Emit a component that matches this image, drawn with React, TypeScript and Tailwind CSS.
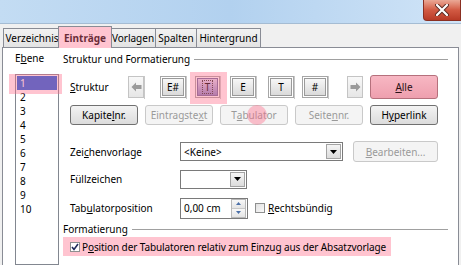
import React from "react";

const U = ({ children }: { children: React.ReactNode }) => (
  <span className="underline underline-offset-[1px] decoration-[1px]">{children}</span>
);

const tabs = [
  { label: "Verzeichnis", w: "w-[57px]" },
  { label: "Einträge", w: "w-[50px]", active: true },
  { label: "Vorlagen", w: "w-[45px]" },
  { label: "Spalten", w: "w-[41px]" },
  { label: "Hintergrund", w: "w-[65px]" },
];

function Btn({
  children,
  w = "w-[68px]",
  h = "h-[20px]",
  disabled,
}: {
  children: React.ReactNode;
  w?: string;
  h?: string;
  disabled?: boolean;
}) {
  return (
    <div
      className={
        "relative flex items-center justify-center rounded-[3px] border whitespace-nowrap " +
        w +
        " " +
        h +
        (disabled
          ? " border-[#c9c9c9] bg-[#f4f4f4] text-[#9a9a9a]"
          : " border-[#707070] bg-gradient-to-b from-[#f3f3f3] to-[#dcdcdc] text-black")
      }
    >
      {children}
    </div>
  );
}

function Token({ label, active }: { label: string; active?: boolean }) {
  return (
    <div className="relative border border-[#a6a6a6] p-[1px] bg-white">
      <div
        className={
          "flex items-center justify-center h-[18px] border " +
          (active
            ? "w-[21px] border-[#6b6b9e] bg-gradient-to-b from-[#dcdcf0] to-[#8587c4]"
            : "w-[22px] border-[#9a9a9a] bg-gradient-to-b from-[#f7f7f7] to-[#dadada]")
        }
      >
        <span className={active ? "border border-dotted border-[#333] px-[2px] leading-[12px]" : ""}>
          {label}
        </span>
      </div>
      {active && (
        <div className="absolute -left-[6px] -top-[5px] w-[37px] h-[32px] bg-[#ff6b8a]/40" />
      )}
    </div>
  );
}

function Gap({ w }: { w: string }) {
  return <div className={"h-[23px] bg-white border-l border-[#c8c8c8] " + w} />;
}

function Arrow({ dir }: { dir: "l" | "r" }) {
  return (
    <div className="w-[16px] h-[22px] border border-[#c4c4c4] bg-gradient-to-b from-[#f8f8f8] to-[#e6e6e6] flex items-center justify-center">
      <svg width="11" height="10" viewBox="0 0 11 10">
        {dir === "l" ? (
          <path d="M0.5 5 L5 0.5 L5 3 L10.5 3 L10.5 7 L5 7 L5 9.5 Z" fill="#9a9a9a" />
        ) : (
          <path d="M10.5 5 L6 0.5 L6 3 L0.5 3 L0.5 7 L6 7 L6 9.5 Z" fill="#9a9a9a" />
        )}
      </svg>
    </div>
  );
}

function DropArrow() {
  return (
    <div className="w-[15px] h-[15px] mr-[1px] border border-[#a3a3a3] bg-gradient-to-b from-[#f5f5f5] to-[#dcdcdc] flex items-center justify-center">
      <svg width="7" height="4" viewBox="0 0 7 4">
        <path d="M0 0 L7 0 L3.5 4 Z" fill="#000" />
      </svg>
    </div>
  );
}

export default function App() {
  return (
    <div className="w-[461px] h-[265px] overflow-hidden bg-[#f0f0f0] flex flex-col font-['Noto_Sans',sans-serif] text-[10px] text-black leading-none">
      {/* title bar */}
      <div className="h-[24px] shrink-0 flex justify-end bg-gradient-to-r from-[#c3dcf3] via-[#b2d1ef] to-[#d0e4f7] border-b border-[#a5bcd3]">
        <div className="w-[38px] h-[21px] rounded-bl-[4px] border border-t-0 border-[#8a2f22] bg-gradient-to-b from-[#eaa896] via-[#d25a43] to-[#b83a26] flex items-center justify-center">
          <svg width="14" height="12" viewBox="0 0 14 12">
            <path d="M2 1 L12 11 M12 1 L2 11" stroke="#5a2a22" strokeWidth="4" strokeLinecap="round" />
            <path d="M2 1 L12 11 M12 1 L2 11" stroke="#fff" strokeWidth="2.2" strokeLinecap="round" />
          </svg>
        </div>
      </div>

      {/* tabs */}
      <div className="h-[23px] shrink-0 flex items-end pl-[3px]">
        {tabs.map((t) =>
          t.active ? (
            <div
              key={t.label}
              className="relative z-10 -mx-[2px] -mb-[1px] h-[22px] w-[54px] px-[2px] border border-b-0 border-[#898c95] bg-white flex items-center justify-center font-bold"
            >
              {t.label}
              <div className="absolute inset-0 bg-[#ff6b8a]/40" />
            </div>
          ) : (
            <div
              key={t.label}
              className={
                "h-[19px] border border-b-0 border-r-0 last:border-r border-[#898c95] bg-gradient-to-b from-[#f2f2f2] to-[#e3e3e3] flex items-center justify-center " +
                t.w
              }
            >
              {t.label}
            </div>
          )
        )}
      </div>

      {/* panel */}
      <div className="flex-1 ml-[2px] w-[457px] border border-b-0 border-[#898c95] bg-white flex">
        {/* Ebene */}
        <div className="w-[60px] shrink-0 pl-[12px] pt-[5px] flex flex-col">
          <div className="h-[12px]">
            E<U>b</U>ene
          </div>
          <div className="relative mt-[9px] w-[44px] flex-1 border border-[#828790] pt-[1px] px-[1px]">
            {["1", "2", "3", "4", "5", "6", "7", "8", "9", "10"].map((n, i) => (
              <div
                key={n}
                className={
                  "h-[14px] pl-[3px] flex items-center " + (i === 0 ? "bg-[#1560e0] text-white" : "")
                }
              >
                {n}
              </div>
            ))}
            <div className="absolute -left-[7px] -top-[1px] w-[53px] h-[20px] bg-[#ff6b8a]/40" />
          </div>
        </div>

        {/* Struktur und Formatierung */}
        <div className="flex-1 pr-[10px] pt-[5px] flex flex-col">
          <div className="h-[12px] flex items-center gap-[4px]">
            <span>Struktur und Formatierung</span>
            <div className="flex-1 border-t border-[#a0a0a0]" />
          </div>

          <div className="mt-[9px] h-[26px] pl-[7px] flex items-center">
            <span className="w-[58px]">
              <U>S</U>truktur
            </span>
            <div className="flex items-center">
              <Arrow dir="l" />
              <Gap w="w-[16px]" />
              <Token label="E#" />
              <Gap w="w-[9px]" />
              <Token label="T" active />
              <Gap w="w-[10px]" />
              <Token label="E" />
              <Gap w="w-[12px]" />
              <Token label="T" />
              <Gap w="w-[8px]" />
              <Token label="#" />
              <Gap w="w-[17px]" />
              <div className="w-[2px]" />
              <Arrow dir="r" />
            </div>
            <div className="ml-[7px] w-[68px] h-[24px] rounded-[3px] border border-[#b5707c] bg-gradient-to-b from-[#f7b7c3] to-[#ee9fae] flex items-center justify-center text-[#2a1015]">
              <U>A</U>lle
            </div>
          </div>

          <div className="mt-[5px] pl-[7px] flex gap-[7px]">
            <Btn>
              Kapite<U>l</U>nr.
            </Btn>
            <Btn disabled>
              Eintragste<U>x</U>t
            </Btn>
            <Btn disabled>
              T<U>a</U>bulator
              <div className="absolute left-[26px] top-[-1px] w-[20px] h-[20px] rounded-full bg-[#ff6b8a]/40" />
            </Btn>
            <Btn disabled>
              Seite<U>n</U>nr.
            </Btn>
            <Btn>
              H<U>y</U>perlink
            </Btn>
          </div>

          <div className="mt-[15px] h-[23px] pl-[7px] flex items-center">
            <span className="w-[110px]">
              Zei<U>c</U>henvorlage
            </span>
            <div className="w-[163px] h-[19px] border border-[#7a7a7a] bg-white flex items-center justify-between pl-[3px]">
              <span>&lt;Keine&gt;</span>
              <DropArrow />
            </div>
            <div className="ml-[10px]">
              <Btn w="w-[85px]" h="h-[21px]" disabled>
                <U>B</U>earbeiten...
              </Btn>
            </div>
          </div>

          <div className="mt-[6px] h-[20px] pl-[7px] flex items-center">
            <span className="w-[110px]">Füllzeichen</span>
            <div className="w-[67px] h-[19px] border border-[#7a7a7a] bg-white flex items-center justify-end">
              <DropArrow />
            </div>
          </div>

          <div className="mt-[8px] h-[22px] pl-[7px] flex items-center">
            <span className="w-[110px]">
              Tab<U>u</U>latorposition
            </span>
            <div className="w-[68px] h-[21px] border border-[#7a7a7a] bg-white flex items-center justify-between pl-[3px]">
              <span>0,00 cm</span>
              <div className="w-[15px] h-[19px] mr-[1px] flex flex-col border border-[#b8b8b8]">
                <div className="flex-1 flex items-center justify-center bg-gradient-to-b from-[#f8f8f8] to-[#e4e4e4] border-b border-[#c8c8c8]">
                  <svg width="5" height="3" viewBox="0 0 5 3">
                    <path d="M0 3 L5 3 L2.5 0 Z" fill="#4a6fa8" />
                  </svg>
                </div>
                <div className="flex-1 flex items-center justify-center bg-gradient-to-b from-[#f8f8f8] to-[#e4e4e4]">
                  <svg width="5" height="3" viewBox="0 0 5 3">
                    <path d="M0 0 L5 0 L2.5 3 Z" fill="#4a6fa8" />
                  </svg>
                </div>
              </div>
            </div>
            <div className="ml-[7px] w-[10px] h-[10px] border border-[#8e8f8f] bg-gradient-to-br from-[#e0e0e0] to-[#fafafa]" />
            <span className="ml-[3px]">
              <U>R</U>echtsbündig
            </span>
          </div>

          <div className="mt-[4px] h-[12px] flex items-center gap-[4px]">
            <span>Formatierung</span>
            <div className="flex-1 border-t border-[#a0a0a0]" />
          </div>

          <div className="mt-[2px] w-[328px] h-[19px] pl-[7px] flex items-center bg-[#ffc4d0] text-black whitespace-nowrap">
            <div className="w-[10px] h-[10px] shrink-0 border border-[#8e8f8f] bg-white flex items-center justify-center">
              <svg width="8" height="8" viewBox="0 0 8 8">
                <path d="M1 4 L3 6.5 L7 1" stroke="#1f2a5a" strokeWidth="1.6" fill="none" />
              </svg>
            </div>
            <span className="ml-[2px] tracking-[-0.1px]">
              P<U>o</U>sition der Tabulatoren relativ zum Einzug aus der Absatzvorlage
            </span>
          </div>
        </div>
      </div>
    </div>
  );
}
